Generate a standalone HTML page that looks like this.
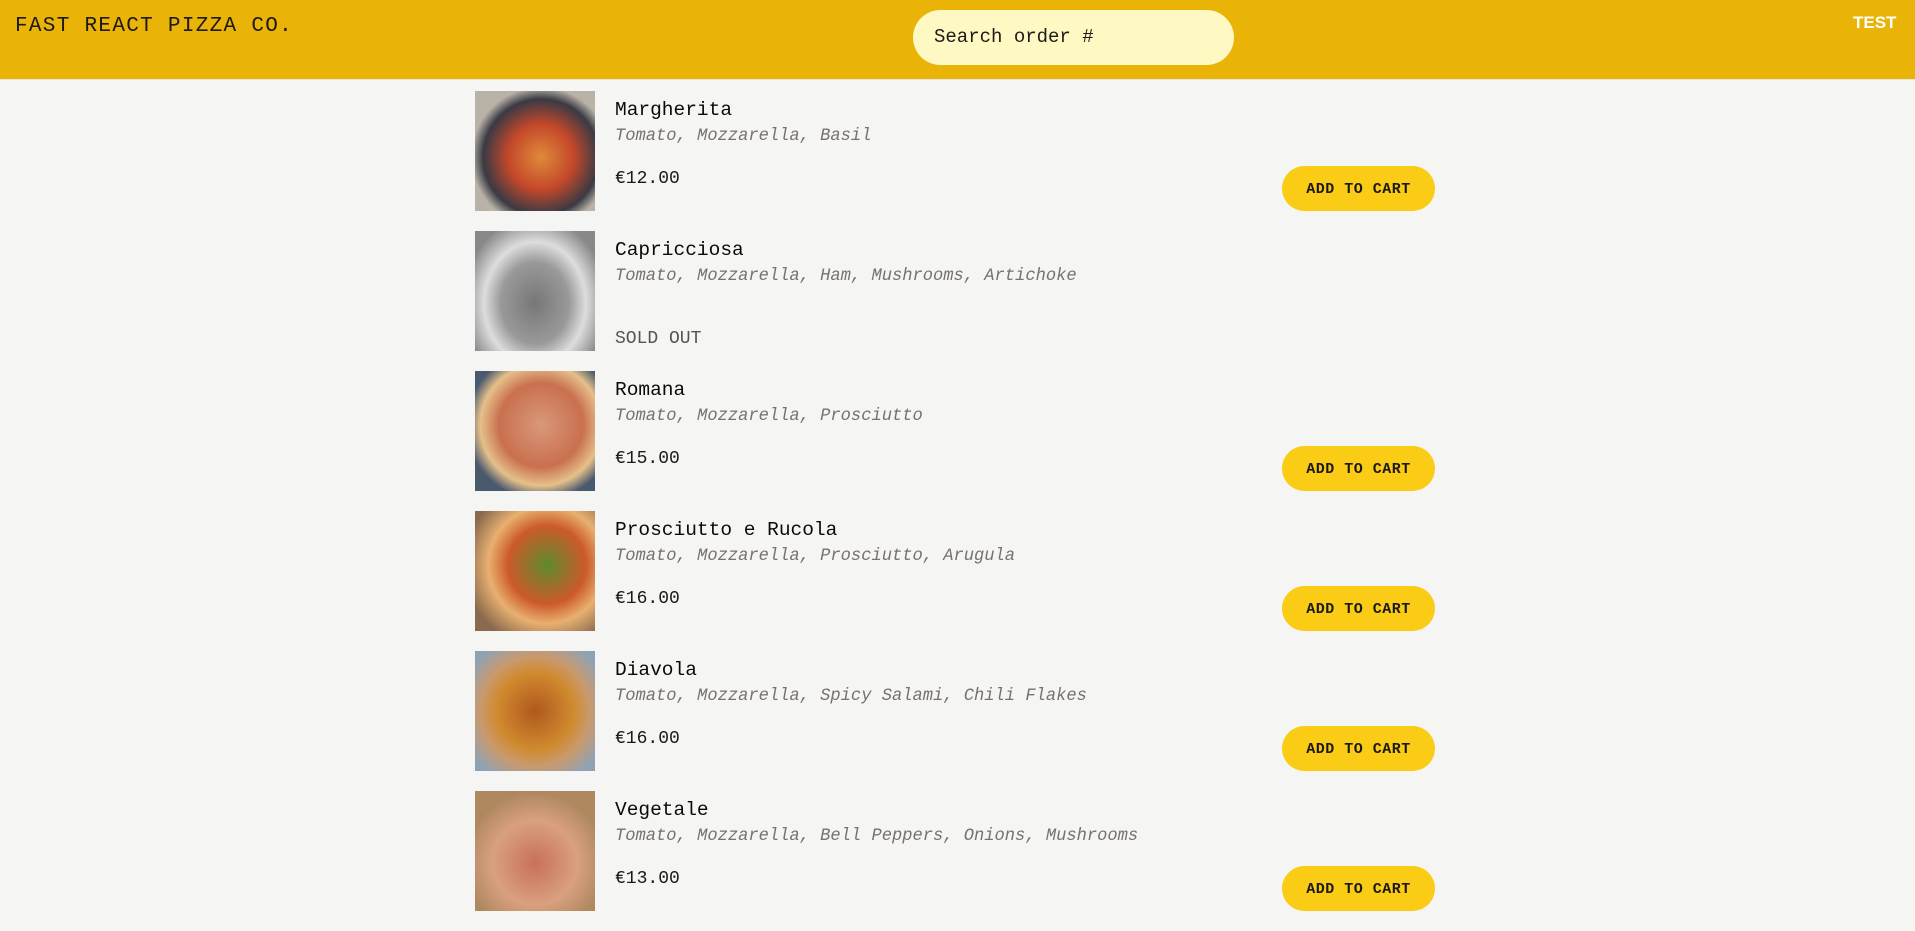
<!DOCTYPE html>
<html><head><meta charset="utf-8"><style>
*{margin:0;padding:0;box-sizing:border-box}
body{width:1915px;height:885px;overflow:hidden;background:#f5f5f4;font-family:"Liberation Mono",monospace;color:#1c1917}
header{height:80px;background:#eab308;border-bottom:1px solid #e7e5e4;position:relative}
.logo{position:absolute;left:15px;top:15px;font-size:21px;letter-spacing:1.3px;color:#1c1917}
.search{position:absolute;left:913px;top:10px;width:321px;height:55px;border-radius:28px;background:#fef9c3;font-size:19px;padding:16px 21px;color:#1c1917}
.test{position:absolute;left:1853px;top:13px;font-family:"Liberation Sans",sans-serif;font-weight:bold;font-size:17px;color:#fff}
ul{position:absolute;left:475px;top:91px;width:960px;list-style:none}
li{height:140px;position:relative}
.img{position:absolute;left:0;top:0;width:120px;height:120px}
.name{position:absolute;left:140px;top:8px;font-size:19.5px;color:#0c0a09}
.ing{position:absolute;left:140px;top:36px;font-size:17.1px;font-style:italic;color:#78716c}
.price{position:absolute;left:140px;top:78px;font-size:18px}
.so{position:absolute;left:140px;top:98px;font-size:18px;color:#57534e}
.btn{position:absolute;left:807px;top:75px;width:153px;height:45px;border-radius:23px;background:#facc15;font-size:15px;font-weight:bold;letter-spacing:0.5px;text-align:center;line-height:47px;color:#1c1917}
</style></head><body>
<header><div class="logo">FAST REACT PIZZA CO.</div><div class="search">Search order #</div><div class="test">TEST</div></header>
<ul>
<li><div class="img" style="background:radial-gradient(circle at 55% 55%,#e08a3a 0,#c4482a 35%,#3a3a44 62%,#b9b2a6 75%)"></div><div class="name">Margherita</div><div class="ing">Tomato, Mozzarella, Basil</div><div class="price">€12.00</div><div class="btn">ADD TO CART</div></li>
<li><div class="img" style="background:radial-gradient(ellipse at 50% 60%,#777 0,#999 40%,#ddd 60%,#888 85%)"></div><div class="name">Capricciosa</div><div class="ing">Tomato, Mozzarella, Ham, Mushrooms, Artichoke</div><div class="so">SOLD OUT</div></li>
<li><div class="img" style="background:radial-gradient(circle at 55% 45%,#d9987a 0,#c9704f 45%,#e5c08a 65%,#4a5a6e 80%)"></div><div class="name">Romana</div><div class="ing">Tomato, Mozzarella, Prosciutto</div><div class="price">€15.00</div><div class="btn">ADD TO CART</div></li>
<li><div class="img" style="background:radial-gradient(circle at 60% 45%,#5e8a2e 0,#cc5a2a 40%,#e8b070 60%,#8a6a4e 85%)"></div><div class="name">Prosciutto e Rucola</div><div class="ing">Tomato, Mozzarella, Prosciutto, Arugula</div><div class="price">€16.00</div><div class="btn">ADD TO CART</div></li>
<li><div class="img" style="background:radial-gradient(circle at 50% 50%,#b0581e 0,#d08a2e 45%,#c89a6e 65%,#8fa2b4 90%)"></div><div class="name">Diavola</div><div class="ing">Tomato, Mozzarella, Spicy Salami, Chili Flakes</div><div class="price">€16.00</div><div class="btn">ADD TO CART</div></li>
<li><div class="img" style="background:radial-gradient(circle at 50% 60%,#c8705a 0,#d9a080 45%,#b08860 75%)"></div><div class="name">Vegetale</div><div class="ing">Tomato, Mozzarella, Bell Peppers, Onions, Mushrooms</div><div class="price">€13.00</div><div class="btn">ADD TO CART</div></li>
</ul>
</body></html>
